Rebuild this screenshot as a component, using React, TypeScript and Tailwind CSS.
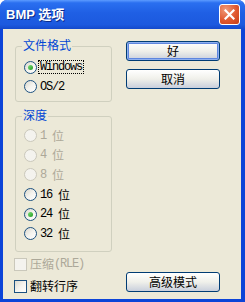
import React from "react";

const CJK = "font-['Noto_Sans_CJK_SC',sans-serif]";
const MONO = "font-['Liberation_Mono','Noto_Sans_CJK_SC',monospace] tracking-[-1.2px]";

function Radio({ checked, disabled }: { checked?: boolean; disabled?: boolean }) {
  return (
    <span
      className={
        "w-[13px] h-[13px] rounded-full border flex items-center justify-center shrink-0 " +
        (disabled
          ? "border-[#cac8bb] bg-[#f4f3ee]"
          : "border-[#1c5180] bg-gradient-to-br from-[#d8d6cc] via-[#f4f3ee] to-white")
      }
    >
      {checked && (
        <span className="w-[5px] h-[5px] rounded-full bg-gradient-to-br from-[#7be07a] to-[#159a15]" />
      )}
    </span>
  );
}

function Check({ disabled }: { disabled?: boolean }) {
  return (
    <span
      className={
        "w-[13px] h-[13px] border shrink-0 " +
        (disabled
          ? "border-[#cac8bb] bg-[#f4f3ee]"
          : "border-[#1c5180] bg-gradient-to-br from-[#dcdad0] via-[#f4f3ee] to-white")
      }
    />
  );
}

function Label({ num, disabled }: { num: string; disabled?: boolean }) {
  return (
    <span className={"flex items-center text-[12px] leading-[12px] " + (disabled ? "text-[#aca899]" : "text-black")}>
      <span className={MONO + " w-[12px] inline-block"} style={{ width: (num.length + 1) * 6 }}>
        {num}
      </span>
      <span className={CJK}>位</span>
    </span>
  );
}

function Button({ children, def }: { children: React.ReactNode; def?: boolean }) {
  return (
    <div
      className={
        "w-[94px] h-[20px] rounded-[3px] border border-[#003c74] flex items-center justify-center text-[12px] leading-[12px] text-black bg-gradient-to-b from-white via-[#f0f0ea] to-[#c9cfdc] " +
        CJK +
        (def ? " shadow-[inset_0_0_0_1px_#8fb0ef,inset_0_0_0_2px_#5e86df]" : "")
      }
    >
      {children}
    </div>
  );
}

export default function App() {
  return (
    <div className="w-[245px] h-[302px] flex flex-col bg-[#0c44d8] rounded-t-[7px] overflow-hidden">
      <div className="h-[29px] shrink-0 flex items-center pl-[6px] pr-[5px] bg-[linear-gradient(180deg,#5c9bff_0%,#2a6ff0_10%,#1f5fe4_45%,#1c59df_85%,#1449cb_100%)]">
        <span className="text-white font-bold text-[13px] leading-[13px] font-['Liberation_Sans','Noto_Sans_CJK_SC',sans-serif] [text-shadow:1px_1px_0_#0a2a8a]">
          BMP 选项
        </span>
        <div className="ml-auto w-[21px] h-[21px] rounded-[3px] border border-white bg-[radial-gradient(circle_at_30%_25%,#f09a78_0%,#e0582f_55%,#c63e17_100%)] flex items-center justify-center">
          <svg width="11" height="11" viewBox="0 0 11 11">
            <path d="M1.5 1.5 L9.5 9.5 M9.5 1.5 L1.5 9.5" stroke="white" strokeWidth="2.2" strokeLinecap="square" />
          </svg>
        </div>
      </div>
      <div className="flex-1 ml-[3px] mr-[4px] mb-[3px] bg-[#ece9d8] flex">
        <div className="ml-[12px] w-[97px] flex flex-col">
          <div className="mt-[17px] relative h-[56px] border border-[#d0d0bf] rounded-[3px] pt-[10px] pl-[8px]">
            <span className={"absolute top-[-8px] left-[6px] px-[1px] bg-[#ece9d8] text-[#0046d5] text-[12px] leading-[12px] " + CJK}>
              文件格式
            </span>
            <div className="h-[20px] flex items-center">
              <Radio checked />
              <span className={"ml-[2px] px-[1px] h-[12px] outline outline-1 outline-dotted outline-black flex items-center text-[12px] leading-[12px] text-black " + MONO}>
                Windows
              </span>
            </div>
            <div className="h-[19px] flex items-center">
              <Radio />
              <span className={"ml-[3px] text-[12px] leading-[12px] text-black " + MONO}>OS/2</span>
            </div>
          </div>
          <div className="mt-[14px] relative h-[136px] border border-[#d0d0bf] rounded-[3px] pt-[9px] pl-[8px]">
            <span className={"absolute top-[-8px] left-[6px] px-[1px] bg-[#ece9d8] text-[#0046d5] text-[12px] leading-[12px] " + CJK}>
              深度
            </span>
            {[
              { n: "1", d: true },
              { n: "4", d: true },
              { n: "8", d: true },
              { n: "16" },
              { n: "24", c: true },
              { n: "32" },
            ].map((r) => (
              <div key={r.n} className="h-[19.6px] flex items-center gap-[3px]">
                <Radio disabled={r.d} checked={r.c} />
                <Label num={r.n} disabled={r.d} />
              </div>
            ))}
          </div>
          <div className="mt-[2px] ml-[-1px] h-[20px] flex items-center gap-[3px]">
            <Check disabled />
            <span className="flex items-center text-[12px] leading-[12px] text-[#aca899]">
              <span className={CJK}>压缩</span>
              <span className={MONO}>(RLE)</span>
            </span>
          </div>
          <div className="mt-[2px] ml-[-1px] h-[20px] flex items-center gap-[3px]">
            <Check />
            <span className={"text-[12px] leading-[12px] text-black " + CJK}>翻转行序</span>
          </div>
        </div>
        <div className="ml-[14px] flex flex-col">
          <div className="mt-[12px]">
            <Button def>好</Button>
          </div>
          <div className="mt-[8px]">
            <Button>取消</Button>
          </div>
          <div className="mt-auto mb-[7px]">
            <Button>高级模式</Button>
          </div>
        </div>
      </div>
    </div>
  );
}
